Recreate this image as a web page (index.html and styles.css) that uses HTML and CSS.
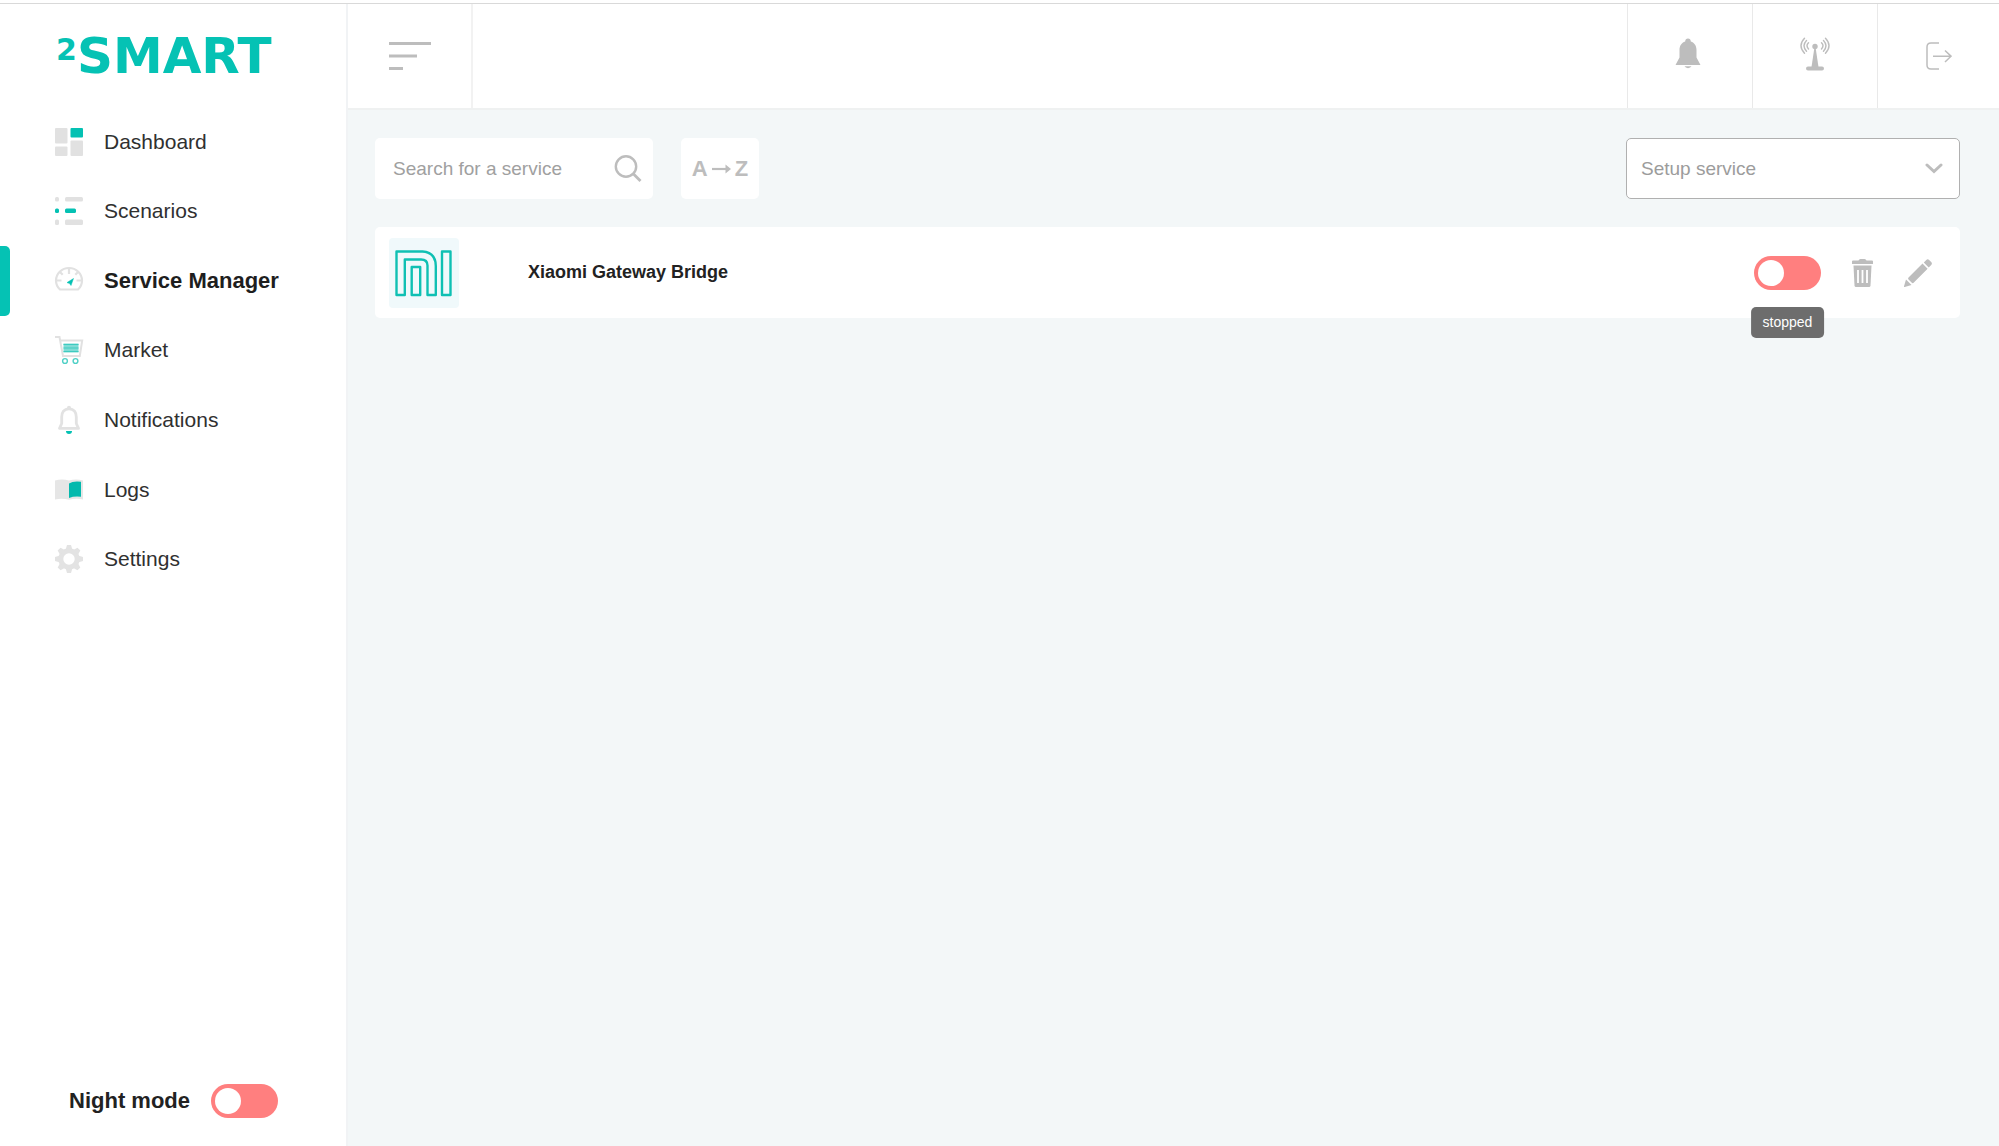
FILE: index.html
```
<!doctype html>
<html lang="en">
<head>
<meta charset="utf-8">
<title>2Smart - Service Manager</title>
<link rel="stylesheet" href="styles.css">
</head>

<body>

<div class="topline"></div>

<div class="page">

<!-- sidebar -->
<aside class="sidebar">
  <a class="logo" href="#"><sup>2</sup>SMART</a>

  <nav class="nav">
    <a class="nav-item" href="#">
      <svg class="nav-icon" viewBox="0 0 28 28">
        <rect x="0" y="0" width="12.5" height="15.500" rx="1" fill="#e1e1e1"/>
        <rect x="0" y="18.500" width="12.5" height="9.500" rx="1" fill="#e1e1e1"/>
        <rect x="15.500" y="0" width="12.5" height="9.500" rx="1" fill="#04c1b3"/>
        <rect x="15.500" y="12.500" width="12.5" height="15.500" rx="1" fill="#e1e1e1"/>
      </svg>
      Dashboard
    </a>
    <a class="nav-item" href="#">
      <svg class="nav-icon" viewBox="0 0 28 28">
        <rect x="0" y="0" width="4" height="4.500" rx="1.500" fill="#e1e1e1"/>
        <rect x="10" y="0" width="18" height="4.500" rx="1.500" fill="#e1e1e1"/>
        <rect x="0" y="11.500" width="4" height="4.500" rx="1.500" fill="#04c1b3"/>
        <rect x="10" y="11.500" width="11" height="4.500" rx="1.500" fill="#04c1b3"/>
        <rect x="0" y="22.500" width="4" height="5.500" rx="1.500" fill="#e1e1e1"/>
        <rect x="10" y="22.500" width="18" height="5.500" rx="1.500" fill="#e1e1e1"/>
      </svg>
      Scenarios
    </a>
    <a class="nav-item active" href="#">
      <svg class="nav-icon" viewBox="0 0 28 28">
        <path d="M5 22.500A13 12.500 0 1 1 23 22.500Z" fill="none" stroke="#e1e1e1" stroke-width="2.200" stroke-linejoin="round"/>
        <path d="M14 1v6M1 13.500h5.500M21.500 13.500h5.500M4.700 4.700l3 3M23.300 4.700l-3 3" stroke="#e1e1e1" stroke-width="2.200"/>
        <path d="M18.500 11.500L16 18.500L14.600 16.600L12 15.600Z" fill="#04c1b3" stroke="#04c1b3" stroke-width="0.500"/>
      </svg>
      Service Manager
    </a>
    <a class="nav-item" href="#">
      <svg class="nav-icon" viewBox="0 0 28 28">
        <path d="M0 1H4.500L8 20H24.800L27.200 4.500H5.300" fill="none" stroke="#e1e1e1" stroke-width="2"/>
        <rect x="8.500" y="7.500" width="15" height="9" fill="#7fdcd5"/>
        <path d="M8.500 8.500h15M8.500 12h15M8.500 15.500h15" stroke="#3ecbc0" stroke-width="1"/>
        <circle cx="10" cy="25" r="2.400" fill="none" stroke="#4fd0c6" stroke-width="1.400"/>
        <circle cx="20.500" cy="25" r="2.400" fill="none" stroke="#4fd0c6" stroke-width="1.400"/>
      </svg>
      Market
    </a>
    <a class="nav-item" href="#">
      <svg class="nav-icon" viewBox="0 0 28 28">
        <path d="M14 2.800C9 2.800 6.700 6.500 6.700 11V17.500L4.500 22.400H23.500L21.300 17.500V11C21.300 6.500 19 2.800 14 2.800Z" fill="none" stroke="#e2e2e2" stroke-width="2.800" stroke-linejoin="round"/>
        <circle cx="14" cy="1.800" r="2" fill="#e2e2e2"/>
        <path d="M11 25h6a3 3 0 0 1-6 0z" fill="#04c1b3"/>
      </svg>
      Notifications
    </a>
    <a class="nav-item" href="#">
      <svg class="nav-icon" viewBox="0 0 28 28">
        <path d="M0 4.500Q7 2.500 14 4.500Q21 2.500 28 4.500V23.500Q21 21.800 14 23.800Q7 21.800 0 23.500Z" fill="#e6e6e6"/>
        <path d="M14 7.500Q18 4.800 26 5.800V20.800Q19 20 14 22Z" fill="#04b9ad"/>
      </svg>
      Logs
    </a>
    <a class="nav-item" href="#">
      <svg class="nav-icon" viewBox="0 0 28 28">
        <circle cx="14" cy="14" r="8.200" fill="none" stroke="#e3e3e3" stroke-width="5"/>
        <g fill="#e3e3e3">
          <path id="tooth" d="M10.500 5L12 0H16L17.500 5Z"/>
          <use href="#tooth" transform="rotate(45 14 14)"/>
          <use href="#tooth" transform="rotate(90 14 14)"/>
          <use href="#tooth" transform="rotate(135 14 14)"/>
          <use href="#tooth" transform="rotate(180 14 14)"/>
          <use href="#tooth" transform="rotate(225 14 14)"/>
          <use href="#tooth" transform="rotate(270 14 14)"/>
          <use href="#tooth" transform="rotate(315 14 14)"/>
        </g>
      </svg>
      Settings
    </a>
  </nav>

  <div class="night">
    <label for="night">Night mode</label>
    <input class="toggle" type="checkbox" id="night">
  </div>
</aside>

<!-- header + content -->
<div class="main">
  <header class="header">
    <button class="header-btn menu" type="button" aria-label="Menu">
      <svg width="42" height="28" viewBox="0 0 42 28">
        <path d="M0 1.500H42M0 14H28M0 26.500H14" stroke="#bdbdbd" stroke-width="3"/>
      </svg>
    </button>
    <div class="header-right">
      <button class="header-btn" type="button" aria-label="Notifications">
        <svg width="30" height="38" viewBox="0 0 30 38">
          <path d="M13 1.500C14.700 1.500 15.800 2.700 15.800 4.500C19.600 5.700 21.500 9 21.500 13V20.500L25.500 28H0.500L4.500 20.500V13C4.500 9 6.400 5.700 10.200 4.500C10.200 2.700 11.300 1.500 13 1.500Z" fill="#bdbdbd"/>
          <path d="M9.500 29.300H16.500A3.800 3 0 0 1 9.500 29.300Z" fill="#bdbdbd"/>
        </svg>
      </button>
      <button class="header-btn" type="button" aria-label="Broker">
        <svg width="30" height="38" viewBox="0 0 30 38">
          <circle cx="15" cy="9.500" r="2.700" fill="#bdbdbd"/>
          <path d="M14.200 12H15.800L18.500 30H11.500Z" fill="#bdbdbd"/>
          <rect x="6" y="29.500" width="18" height="4" rx="2" fill="#bdbdbd"/>
          <g fill="none" stroke="#bdbdbd" stroke-width="1.400" stroke-linecap="round">
            <path d="M4.500 1.200Q-2.500 8.500 4.500 16.300M6.500 3.500Q1.500 8.800 6.500 14.200M8.500 5.700Q5.500 8.800 8.500 12"/>
            <path d="M25.500 1.200Q32.500 8.500 25.500 16.300M23.500 3.500Q28.500 8.800 23.500 14.200M21.500 5.700Q24.500 8.800 21.500 12"/>
          </g>
        </svg>
      </button>
      <button class="header-btn" type="button" aria-label="Log out">
        <svg width="26" height="28" viewBox="0 0 26 28">
          <path d="M13 1H5Q1 1 1 5V23Q1 27 5 27H13M7 14.200H25M19 8.500L25 14.200L19 20" fill="none" stroke="#bdbdbd" stroke-width="1.500"/>
        </svg>
      </button>
    </div>
  </header>

  <main class="content">
    <div class="toolbar">
      <div class="search">
        <input type="text" id="search" placeholder="Search for a service" aria-label="Search for a service">
        <svg width="28" height="28" viewBox="0 0 28 28">
          <circle cx="12" cy="11.500" r="10.200" fill="none" stroke="#bdbdbd" stroke-width="2.400"/>
          <path d="M19 18.500L26.500 26" stroke="#bdbdbd" stroke-width="2.800"/>
        </svg>
      </div>
      <button class="sort" type="button">
        A
        <svg width="19" height="10" viewBox="0 0 19 10">
          <path d="M0 5H16" stroke="#bdbdbd" stroke-width="2.200"/>
          <path d="M13.500 0.500L19 5L13.500 9.500Z" fill="#bdbdbd"/>
        </svg>
        Z
      </button>
      <div class="setup">
        <select aria-label="Setup service">
          <option>Setup service</option>
        </select>
        <svg width="18" height="11" viewBox="0 0 18 11">
          <path d="M2 2L9 8.500L16 2" fill="none" stroke="#bdbdbd" stroke-width="3" stroke-linecap="round"/>
        </svg>
      </div>
    </div>

    <div class="service">
      <svg class="service-icon" viewBox="0 0 70 70">
        <g fill="none" stroke="#0fc0b3" stroke-width="2.400" stroke-linejoin="round">
          <path d="M7.500 13.500H33.500Q46.800 14.500 46.800 28V57H38.500V27.500Q38.500 21.500 32 21.500H15.800V57H7.500Z"/>
          <rect x="22.700" y="29" width="8.500" height="28"/>
          <rect x="53" y="13.500" width="8.500" height="43.500"/>
        </g>
      </svg>
      <h2 class="service-name">Xiaomi Gateway Bridge</h2>
      <div class="status">
        <input class="toggle" type="checkbox" aria-label="Service status" aria-describedby="tip">
        <span class="tooltip" id="tip" role="tooltip">stopped</span>
      </div>
      <button class="icon-btn" type="button" aria-label="Delete">
        <svg width="21" height="28" viewBox="0 0 21 28">
          <path d="M0 2.500Q0 1.500 1 1.500H6.500Q7 0 8.500 0H12.500Q14 0 14.500 1.500H20Q21 1.500 21 2.500V5H0Z" fill="#bdbdbd"/>
          <path d="M1.500 6.500H19.500L18.500 26.500Q18.400 28 17 28H4Q2.600 28 2.500 26.500Z" fill="#bdbdbd"/>
          <path d="M6 11V24M10.500 11V24M15 11V24" stroke="#fff" stroke-width="1.800"/>
        </svg>
      </button>
      <button class="icon-btn" type="button" aria-label="Edit">
        <svg width="28" height="28" viewBox="0 0 28 28">
          <path d="M22.300 1Q23.700 -0.400 25.100 1L27.200 3.100Q28.600 4.500 27.200 5.900L24.700 8.400L19.800 3.500Z" fill="#bdbdbd"/>
          <path d="M18.500 4.600L23.600 9.700L9.600 23.700Q8.700 24.600 7.800 23.700L4.500 20.400Q3.600 19.500 4.500 18.600Z" fill="#bdbdbd"/>
          <path d="M2 20.500L7.500 26L0.700 28Q-0.200 28.200 0 27.300Z" fill="#bdbdbd"/>
        </svg>
      </button>
    </div>
  </main>
</div>

</div>

</body>
</html>
```
FILE: styles.css
```
* {
  box-sizing: border-box;
}

body {
  margin: 0;
  min-height: 100vh;
  display: flex;
  flex-direction: column;
  font-family: "Liberation Sans", Arial, sans-serif;
  color: #222222;
  background-color: #ffffff;
}

button {
  margin: 0;
  padding: 0;
  border: 0;
  background: none;
  font-family: inherit;
  cursor: pointer;
}

svg {
  display: block;
  flex: none;
}

.topline {
  height: 4px;
  border-bottom: 1px solid #d9d9d9;
}

.page {
  flex: 1;
  display: flex;
}

/* sidebar */

.sidebar {
  flex: none;
  width: 348px;
  display: flex;
  flex-direction: column;
  border-right: 2px solid #f1f3f5;
}

.logo {
  display: flex;
  align-items: center;
  height: 103px;
  padding-left: 56px;
  font-family: "DejaVu Sans", sans-serif;
  font-size: 50px;
  font-weight: bold;
  color: #05c2b4;
  text-decoration: none;
}

.logo sup {
  align-self: flex-start;
  padding-top: 28px;
  font-size: 30px;
  line-height: 36px;
}

.nav {
  display: grid;
  grid-auto-rows: 1fr;
  height: 487px;
}

.nav-item {
  position: relative;
  display: flex;
  align-items: center;
  gap: 21px;
  padding-left: 55px;
  font-size: 21px;
  color: #303030;
  text-decoration: none;
}

.nav-item.active {
  font-size: 22px;
  font-weight: bold;
  color: #1e1e1e;
}

.nav-item.active::before {
  content: "";
  position: absolute;
  top: 0;
  bottom: 0;
  left: 0;
  width: 10px;
  border-radius: 0 5px 5px 0;
  background-color: #05c2b4;
}

.nav-icon {
  width: 28px;
  height: 28px;
  overflow: visible;
}

.night {
  display: flex;
  align-items: center;
  gap: 21px;
  margin-top: auto;
  padding: 0 0 28px 69px;
  font-size: 22px;
  font-weight: bold;
}

.toggle {
  appearance: none;
  display: block;
  flex: none;
  width: 67px;
  height: 34px;
  margin: 0;
  padding: 4px;
  border-radius: 17px;
  background-color: #ff7f7f;
  cursor: pointer;
}

.toggle::before {
  content: "";
  display: block;
  width: 26px;
  height: 26px;
  border-radius: 50%;
  background-color: #ffffff;
}

.toggle:checked {
  background-color: #05c2b4;
}

.toggle:checked::before {
  margin-left: auto;
}

/* header */

.main {
  flex: 1;
  min-width: 0;
  display: flex;
  flex-direction: column;
}

.header {
  display: flex;
  justify-content: space-between;
  height: 106px;
  border-bottom: 2px solid #eff1f1;
}

.header-right {
  display: flex;
}

.header-btn {
  display: flex;
  align-items: center;
  justify-content: center;
  width: 125px;
  border-left: 1px solid #e9e9e9;
}

.header-btn:last-child {
  width: 122px;
}

.header-btn.menu {
  width: 125px;
  border-left: 0;
  border-right: 2px solid #f2f2f2;
}

/* content */

.content {
  flex: 1;
  padding: 28px 39px 28px 27px;
  background-color: #f3f7f8;
}

.toolbar {
  display: flex;
  gap: 28px;
  height: 61px;
  margin-bottom: 28px;
}

.search {
  display: flex;
  align-items: center;
  width: 278px;
  padding: 0 11px 0 18px;
  border-radius: 5px;
  background-color: #ffffff;
}

.search input {
  flex: 1;
  min-width: 0;
  height: 100%;
  padding: 0;
  border: 0;
  outline: 0;
  background: none;
  font-family: inherit;
  font-size: 19px;
  color: #303030;
}

.search input::placeholder {
  color: #a0a0a0;
}

.sort {
  display: flex;
  align-items: center;
  justify-content: center;
  gap: 4px;
  width: 78px;
  border-radius: 5px;
  background-color: #ffffff;
  font-size: 22px;
  font-weight: bold;
  color: #bdbdbd;
}

.setup {
  position: relative;
  width: 334px;
  margin-left: auto;
}

.setup select {
  appearance: none;
  width: 100%;
  height: 100%;
  padding: 0 44px 0 14px;
  border: 1px solid #b0b0b0;
  border-radius: 5px;
  background-color: #ffffff;
  font-family: inherit;
  font-size: 19px;
  color: #9c9c9c;
}

.setup svg {
  position: absolute;
  top: 25px;
  right: 17px;
  pointer-events: none;
}

.service {
  display: flex;
  align-items: center;
  height: 91px;
  padding: 0 28px 0 14px;
  border-radius: 5px;
  background-color: #ffffff;
}

.service-icon {
  width: 70px;
  height: 70px;
  border-radius: 4px;
  background-color: #f0f9fb;
}

.service-name {
  flex: 1;
  margin: 0 0 0 69px;
  font-size: 18px;
  font-weight: bold;
}

.status {
  position: relative;
}

.tooltip {
  position: absolute;
  top: 51px;
  left: 50%;
  transform: translateX(-50%);
  padding: 0 12px;
  border-radius: 5px;
  background-color: #6d6d6d;
  font-size: 14px;
  line-height: 31px;
  color: #ffffff;
}

.icon-btn {
  margin-left: 31px;
}
```
